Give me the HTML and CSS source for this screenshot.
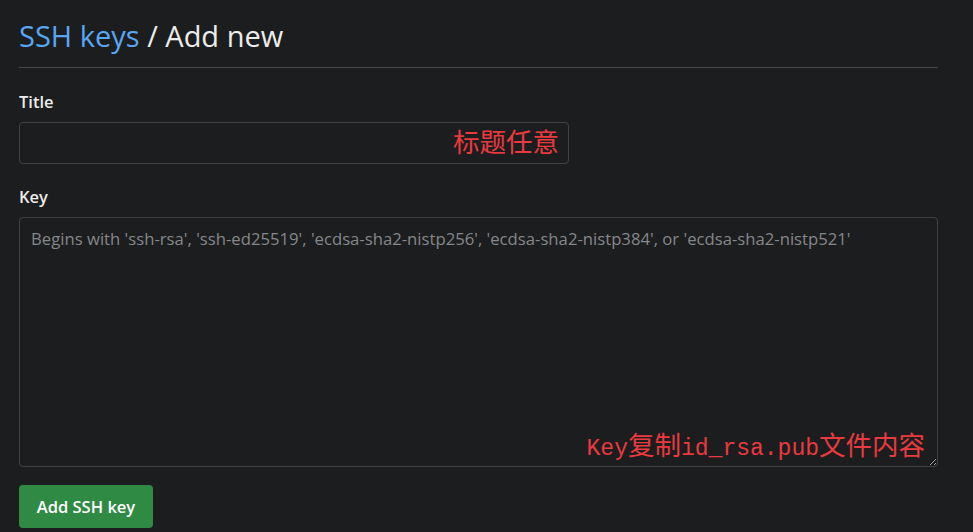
FILE: index.html
```html
<!DOCTYPE html>
<html>
<head>
<meta charset="utf-8">
<link rel="stylesheet" href="styles.css">
</head>
<body>
<div class="page">
  <h1 class="heading"><a class="crumb" href="#">SSH keys</a> / Add new</h1>
  <form class="form">
    <label class="label" for="title">Title</label>
    <div class="field field-title">
      <input id="title" class="input" type="text">
      <span class="note note-title">标题任意</span>
    </div>
    <label class="label label-key" for="key">Key</label>
    <div class="field field-key">
      <textarea id="key" class="textarea" placeholder="Begins with 'ssh-rsa', 'ssh-ed25519', 'ecdsa-sha2-nistp256', 'ecdsa-sha2-nistp384', or 'ecdsa-sha2-nistp521'"></textarea>
      <span class="note note-key"><span class="lat">Key</span>复制<span class="lat">id_rsa.pub</span>文件内容</span>
    </div>
    <button class="btn" type="button">Add SSH key</button>
  </form>
</div>
</body>
</html>
```
FILE: styles.css
```css
html, body {
  margin: 0;
  padding: 0;
  background: #1c1d1e;
}
body {
  font-family: "Open Sans", "Noto Sans", sans-serif;
  color: #e6e6e6;
}
.page {
  padding: 0 35px 0 19px;
}
.heading {
  margin: 0;
  padding: 17px 0 12px;
  font-weight: 400;
  font-size: 29px;
  line-height: 38px;
  color: #ececec;
  border-bottom: 1px solid #444648;
}
.crumb {
  color: #58a6f2;
  text-decoration: none;
}
.form {
  display: flex;
  flex-direction: column;
  align-items: flex-start;
}
.label {
  font-weight: 600;
  font-size: 16.5px;
  line-height: 20px;
  color: #ececec;
  margin-top: 24px;
  margin-bottom: 10px;
}
.label-key {
  margin-top: 23px;
  margin-bottom: 10px;
}
.field {
  position: relative;
}
.field-title {
  width: 550px;
}
.field-key {
  width: 100%;
}
.input, .textarea {
  box-sizing: border-box;
  width: 100%;
  background: #1c1d1e;
  border: 1px solid #3f4245;
  border-radius: 4px;
  color: #e6e6e6;
  font-family: "Open Sans", "Noto Sans", sans-serif;
  font-size: 16.7px;
  display: block;
  margin: 0;
}
.input {
  height: 42px;
}
.textarea {
  height: 250px;
  padding: 10px 11px;
  resize: vertical;
  line-height: 22px;
}
.textarea::placeholder {
  color: #85878a;
}
.note {
  position: absolute;
  color: #ea3a3f;
  font-family: "Noto Sans CJK SC", sans-serif;
  font-size: 26.5px;
  line-height: 30px;
  pointer-events: none;
}
.note-title {
  right: 10px;
  top: 4px;
}
.note-key {
  right: 13px;
  bottom: 3px;
}
.lat {
  font-family: "Liberation Mono", monospace;
  font-size: 23px;
}
.btn {
  margin-top: 18px;
  width: 134px;
  height: 43px;
  border: none;
  border-radius: 4px;
  background: #2f8b44;
  color: #ffffff;
  font-family: "Open Sans", "Noto Sans", sans-serif;
  font-weight: 600;
  font-size: 16.5px;
  padding: 0;
}
```
